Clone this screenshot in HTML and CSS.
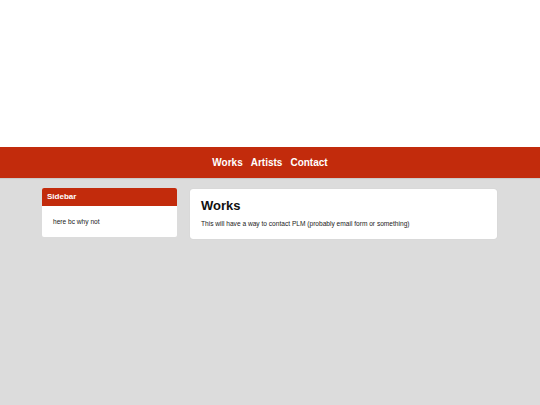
FILE: index.html
```html
<!DOCTYPE html>
<html lang="en">
<head>
    <meta charset="UTF-8">
    <meta name="viewport" content="width=device-width, initial-scale=1.0">
    <title>Works</title>
    <link rel="stylesheet" href="styles.css">
</head>
<body>
    <header class="banner"></header>
    <nav class="topnav">
        <a href="#">Works</a>
        <a href="#">Artists</a>
        <a href="#">Contact</a>
    </nav>
    <div class="page">
        <aside class="sidebar">
            <div class="sidebar-title">Sidebar</div>
            <div class="sidebar-body">here bc why not</div>
        </aside>
        <main class="content">
            <h1>Works</h1>
            <p>This will have a way to contact PLM (probably email form or something)</p>
        </main>
    </div>
</body>
</html>
```

FILE: styles.css
```css
html, body {
    margin: 0;
    padding: 0;
}
body {
    font-family: "Liberation Sans", Arial, sans-serif;
    background-color: #dcdcdc;
    min-height: 405px;
}
.banner {
    height: 147px;
    background: white;
}
.topnav {
    height: 31px;
    background-color: #c22b0c;
    display: flex;
    justify-content: center;
    align-items: center;
    gap: 8px;
    box-shadow: 0 1px 1px rgba(0,0,0,0.08);
}
.topnav a {
    color: white;
    font-size: 10px;
    font-weight: bold;
    text-decoration: none;
}
.page {
    width: 455px;
    margin: 10px 0 0 42px;
    display: flex;
    align-items: flex-start;
    gap: 13px;
}
.sidebar {
    width: 135px;
    background: white;
    border-radius: 2px;
    overflow: hidden;
}
.sidebar-title {
    background-color: #c22b0c;
    color: white;
    font-size: 8px;
    font-weight: bold;
    height: 18px;
    line-height: 18px;
    padding-left: 5px;
}
.sidebar-body {
    font-size: 6.6px;
    color: #222;
    padding: 12px 11px 11px;
    line-height: 8px;
}
.content {
    flex: 1;
    margin-top: 1px;
    background: white;
    border-radius: 3px;
    padding: 9px 11px 11px;
    box-shadow: 0 0 1px rgba(0,0,0,0.15);
}
.content h1 {
    font-size: 13px;
    margin: 0 0 6px;
    line-height: 16px;
    color: #111;
}
.content p {
    font-size: 6.6px;
    margin: 0;
    line-height: 8px;
    color: #222;
}
```
